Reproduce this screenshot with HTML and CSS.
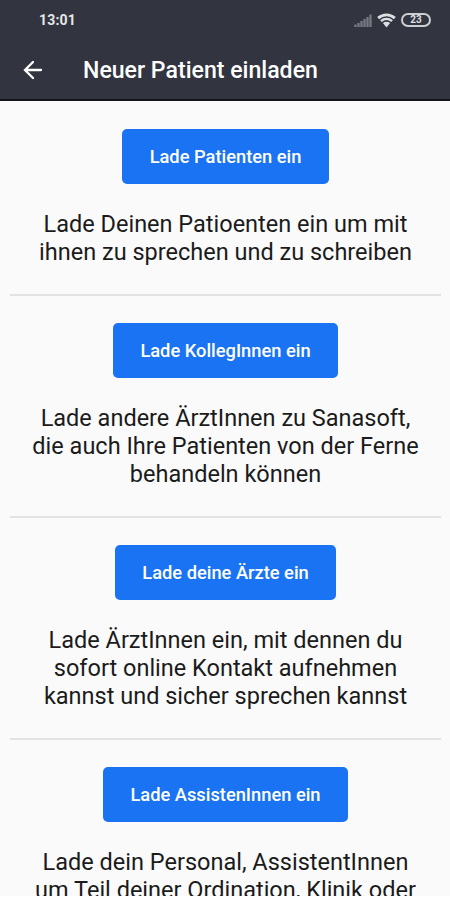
FILE: index.html
```html
<!DOCTYPE html>
<html lang="de">
<head>
    <meta charset="UTF-8">
    <meta name="viewport" content="width=device-width, initial-scale=1.0">
    <title>Neuer Patient einladen</title>
    <link rel="stylesheet" href="styles.css">
</head>
<body>
    <div class="screen">
        <header class="header">
            <div class="status-bar">
                <span class="time">13:01</span>
                <div class="status-icons">
                    <svg class="signal" width="18" height="13" viewBox="0 0 18 13">
                        <path d="M1.5 10.5V13M4.5 9V13M7.5 7V13M10.5 5V13M13.5 3V13M16.5 0.5V13" stroke="#777983" stroke-width="2.3"/>
                    </svg>
                    <svg class="wifi" width="19" height="15" viewBox="0 0 20 15" fill="none" stroke="#dedfe2">
                        <path d="M1.2 5C6.3 0.5 13.7 0.5 18.8 5" stroke-width="3"/>
                        <path d="M4.2 8.2C7.6 5.2 12.4 5.2 15.8 8.2" stroke-width="2.6"/>
                        <path d="M6.2 10.2Q10 7.4 13.8 10.2L10 14.8Z" fill="#dedfe2" stroke="none"/>
                    </svg>
                    <div class="battery"><span class="battery-level">23</span></div>
                </div>
            </div>
            <div class="toolbar">
                <svg class="back" width="20" height="20" viewBox="0 0 20 20" fill="none" stroke="#fff" stroke-width="2.3" stroke-linecap="round">
                    <path d="M18 10H2.5M10 2L2 10L10 18"/>
                </svg>
                <h1 class="title">Neuer Patient einladen</h1>
            </div>
        </header>

        <main class="content">
            <section class="invite">
                <button class="btn">Lade Patienten ein</button>
                <p class="text">Lade Deinen Patioenten ein um mit<br>ihnen zu sprechen und zu schreiben</p>
            </section>
            <section class="invite">
                <button class="btn">Lade KollegInnen ein</button>
                <p class="text">Lade andere ÄrztInnen zu Sanasoft,<br>die auch Ihre Patienten von der Ferne<br>behandeln können</p>
            </section>
            <section class="invite">
                <button class="btn">Lade deine Ärzte ein</button>
                <p class="text">Lade ÄrztInnen ein, mit dennen du<br>sofort online Kontakt aufnehmen<br>kannst und sicher sprechen kannst</p>
            </section>
            <section class="invite">
                <button class="btn">Lade AssistenInnen ein</button>
                <p class="text">Lade dein Personal, AssistentInnen<br>um Teil deiner Ordination, Klinik oder</p>
            </section>
        </main>
    </div>
</body>
</html>
```
FILE: styles.css
```css
* {
    box-sizing: border-box;
}

body {
    margin: 0;
    height: 900px;
    overflow: hidden;
    background: #fff;
    font-family: Roboto, "Liberation Sans", sans-serif;
}

.screen {
    height: 896px;
    overflow: hidden;
    background: #fafafa;
}

.header {
    height: 101px;
    background: #32343f;
    border-bottom: 2px solid #14151c;
    color: #fff;
}

.status-bar {
    display: flex;
    align-items: center;
    justify-content: space-between;
    height: 40px;
    padding: 0 19px 0 39px;
}

.time {
    font-size: 14px;
    font-weight: 700;
    letter-spacing: 0.2px;
    color: #e6e7ea;
}

.status-icons {
    display: flex;
    align-items: center;
    gap: 5px;
}

.battery {
    display: flex;
    align-items: center;
    justify-content: center;
    width: 30px;
    height: 14px;
    border: 2px solid #cdced3;
    border-radius: 7px;
}

.battery-level {
    font-size: 10px;
    font-weight: 700;
    line-height: 10px;
    color: #dedfe2;
}

.toolbar {
    display: flex;
    align-items: center;
    height: 59px;
    padding-left: 23px;
}

.title {
    margin: 0 0 0 40px;
    padding-top: 2px;
    font-size: 23.1px;
    font-weight: 500;
    line-height: 28px;
}

.content {
    padding-top: 1px;
}

.invite {
    display: flex;
    flex-direction: column;
    align-items: center;
    margin: 0 9px 0 10px;
    padding: 27px 0 28px;
    border-bottom: 2px solid #e2e2e2;
}

.invite:last-child {
    border-bottom: none;
}

.btn {
    height: 55px;
    padding: 0 27.5px;
    border: none;
    border-radius: 5px;
    background: #1a73f3;
    color: #fff;
    font-family: inherit;
    font-size: 18.3px;
    font-weight: 500;
}

.text {
    margin: 26px 0 0;
    font-size: 23.5px;
    line-height: 28px;
    text-align: center;
    white-space: nowrap;
    color: #1b1b1b;
}
```
